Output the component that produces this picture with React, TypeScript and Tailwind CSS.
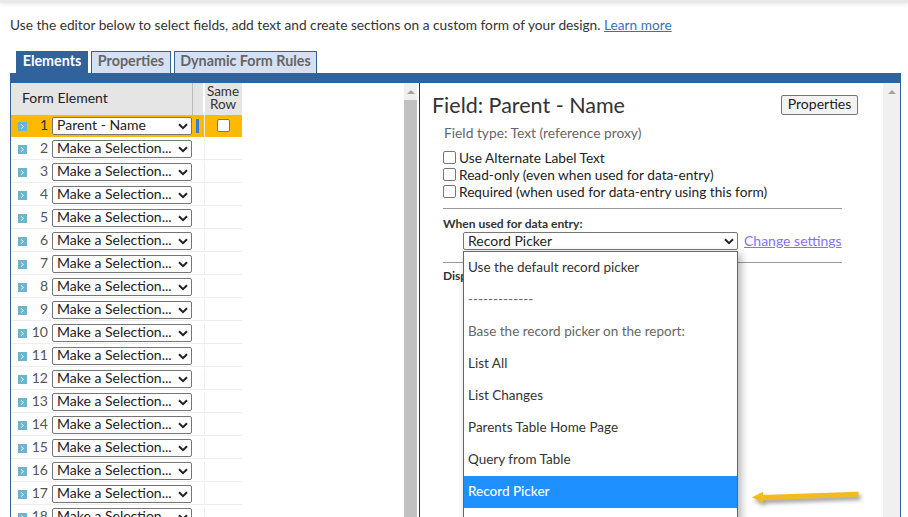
const rows = Array.from({ length: 18 }, (_, i) => i + 1);

const menuItems = [
  "Use the default record picker",
  "-------------",
  "Base the record picker on the report:",
  "List All",
  "List Changes",
  "Parents Table Home Page",
  "Query from Table",
  "Record Picker",
  "",
];

const Chevron = () => (
  <svg width="10" height="7" viewBox="0 0 10 7" className="shrink-0">
    <path d="M1 1.2 5 5.2 9 1.2" fill="none" stroke="#222" strokeWidth="2" />
  </svg>
);

const FakeSelect = ({ label, className, labelClass }: { label: string; className: string; labelClass: string }) => (
  <div className={`flex items-center justify-between bg-white border border-[#767676] rounded-[2px] pl-[4px] pr-[3px] text-[14px] text-[#222] ${className}`}>
    <span className={`whitespace-nowrap leading-[16px] ${labelClass}`}>{label}</span>
    <Chevron />
  </div>
);

const Expander = () => (
  <div className="w-[9px] h-[9px] bg-[#6cb4d0] flex items-center justify-center shrink-0">
    <svg width="5" height="5" viewBox="0 0 5 5">
      <path d="M1.2 .5 3.4 2.5 1.2 4.5" fill="none" stroke="#fff" strokeWidth="1" />
    </svg>
  </div>
);

const FormRow = ({ n }: { n: number }) => {
  const active = n === 1;
  return (
    <div className={`flex shrink-0 items-stretch ${active ? "h-[22px] bg-[#ffb900]" : "h-[23px] pt-[2px] border-b border-[#eeeeee]"}`}>
      <div className="w-[7px] shrink-0" />
      <div className="flex items-center w-[175px] shrink-0">
        <Expander />
        <span className={`w-[21px] text-right text-[14px] leading-[16px] pb-[2px] mr-[4px] ${active ? "text-[#333]" : "text-[#555]"}`}>{n}</span>
        <FakeSelect label={active ? "Parent - Name" : "Make a Selection..."} className="w-[140px] h-[18px]" labelClass="pb-[2px]" />
      </div>
      <div className="w-[12px] shrink-0 flex items-center border-r border-[#eeeeee] pl-[3px]">
        {active && <div className="w-[3px] h-[14px] bg-[#2f7fd6]" />}
      </div>
      <div className="w-[37px] shrink-0 flex items-center justify-center">
        {active && <div className="w-[13px] h-[13px] bg-white border border-[#767676] rounded-[2px] mb-[1px]" />}
      </div>
    </div>
  );
};

const Check = ({ label }: { label: string }) => (
  <div className="flex items-center h-[17px]">
    <div className="w-[13px] h-[13px] bg-white border border-[#767676] rounded-[2px] mr-[3px] mb-[2px]" />
    <span className="text-[13.7px] text-[#222]">{label}</span>
  </div>
);

const ScrollTrack = ({ thumb, className }: { thumb: boolean; className: string }) => (
  <div className={`flex flex-col bg-[#f0f0f0] shrink-0 ${className}`}>
    <div className="h-[17px] flex items-center justify-center">
      <div className="w-0 h-0 border-x-[4px] border-x-transparent border-b-[4px] border-b-[#a3a3a3]" />
    </div>
    {thumb && <div className="flex-1 bg-[#c1c1c1]" />}
  </div>
);

export default function App() {
  return (
    <div
      className="relative w-[908px] h-[517px] overflow-hidden bg-white text-[#222]"
      style={{ fontFamily: "Lato, 'Open Sans', sans-serif" }}
    >
      <div className="h-[3px] bg-[#e9e9e9] shadow-[0_1px_4px_rgba(0,0,0,0.12)]" />
      <p className="pl-[10px] mt-[13px] h-[17px] leading-[17px] text-[13.7px] text-[#333]">
        Use the editor below to select fields, add text and create sections on a custom form of your design.{" "}
        <a className="text-[#3f6fb5] underline">Learn more</a>
      </p>

      {/* tabs */}
      <div className="flex items-end ml-[16px] mt-[18px] h-[22px] gap-[3px]">
        <div className="h-[22px] w-[72px] pb-[3px] bg-[#30629c] text-white font-bold text-[14.3px] flex items-center justify-center">
          Elements
        </div>
        <div className="h-[22px] w-[80px] pb-[3px] bg-[#d5e1f2] border border-b-0 border-[#30629c] text-[#666] font-bold text-[14.3px] flex items-center justify-center">
          Properties
        </div>
        <div className="h-[22px] w-[143px] pb-[3px] bg-[#d5e1f2] border border-b-0 border-[#30629c] text-[#666] font-bold text-[14.3px] flex items-center justify-center whitespace-nowrap">
          Dynamic Form Rules
        </div>
      </div>

      <div className="ml-[10px] w-[891px] h-[444px] border-x border-[#30629c] border-t-[10px] flex overflow-hidden">
        {/* left panel */}
        <div className="w-[231px] shrink-0 flex flex-col">
          <div className="flex h-[32px] shrink-0 bg-[#e5e5e5] pl-[1px]">
            <div className="w-[181px] border-r border-[#bbbbbb] flex items-center pl-[10px] pb-[4px] text-[14px] text-[#222]">
              Form Element
            </div>
            <div className="w-[12px] border-r-2 border-white" />
            <div className="w-[36px] text-[13.5px] leading-[13px] text-center text-[#333] pt-[2px]">
              Same<br />Row
            </div>
          </div>
          {rows.map((n) => (
            <FormRow key={n} n={n} />
          ))}
        </div>

        <div className="w-[162px] shrink-0" />
        <ScrollTrack thumb className="w-[13px]" />
        <div className="w-[2px] shrink-0" />

        {/* right panel */}
        <div className="flex-1 border-l border-[#333] relative flex flex-col min-w-0 pl-[12px]">
          <div className="flex items-start justify-between w-[426px] pt-[10px]">
            <h2 className="text-[21.5px] leading-[24px] text-[#333]">Field: Parent - Name</h2>
            <button className="w-[77px] h-[20px] mt-[2px] pb-[3px] bg-[#f3f3f3] border border-[#767676] rounded-[2px] text-[14px] leading-[15px] text-[#222]">
              Properties
            </button>
          </div>
          <div className="pl-[12px] mt-[7px] text-[13.8px] leading-[17px] text-[#666]">Field type: Text (reference proxy)</div>
          <div className="pl-[11px] mt-[9px] flex flex-col">
            <Check label="Use Alternate Label Text" />
            <Check label="Read-only (even when used for data-entry)" />
            <Check label="Required (when used for data-entry using this form)" />
          </div>
          <div className="ml-[11px] w-[399px] mt-[7px] border-t border-[#999]" />
          <div className="ml-[11px] mt-[8px] text-[12px] leading-[14px] font-bold text-[#333]">When used for data entry:</div>
          <div className="ml-[31px] mt-[1px] flex items-center h-[18px]">
            <FakeSelect label="Record Picker" className="w-[275px] h-[18px] border-[#444]" labelClass="pb-[1px]" />
            <a className="ml-[6px] text-[14px] leading-[16px] text-[#8673f0] underline whitespace-nowrap">Change settings</a>
          </div>
          <div className="ml-[11px] w-[399px] mt-[12px] border-t border-[#999]" />
          <div className="ml-[11px] mt-[6px] text-[12px] leading-[14px] font-bold text-[#333]">Display</div>
        </div>

        <ScrollTrack thumb={false} className="w-[17px]" />
      </div>

      {/* open dropdown list */}
      <div className="absolute left-[463px] top-[251px] w-[275px] h-[280px] bg-white border border-[#666] shadow-[3px_3px_8px_rgba(0,0,0,0.3)]">
        {menuItems.map((item, i) => (
          <div
            key={i}
            className={`h-[32px] flex items-center pl-[4px] pb-[2px] text-[13.5px] ${
              item === "Record Picker"
                ? "bg-[#1e90ff] text-white font-medium"
                : i === 1 || i === 2
                ? "text-[#666]"
                : "text-[#333]"
            }`}
          >
            {item}
          </div>
        ))}
      </div>

      {/* annotation arrow */}
      <svg className="absolute left-[748px] top-[485px] drop-shadow-[2px_3px_2px_rgba(0,0,0,0.4)]" width="116" height="24" viewBox="0 0 116 24">
        <path d="M110.5 6.7 L15 10 L15 6.7 L4 12.3 L15 18 L15 15.2 L110.5 11.7 Z" fill="#f3bb22" />
      </svg>
    </div>
  );
}
